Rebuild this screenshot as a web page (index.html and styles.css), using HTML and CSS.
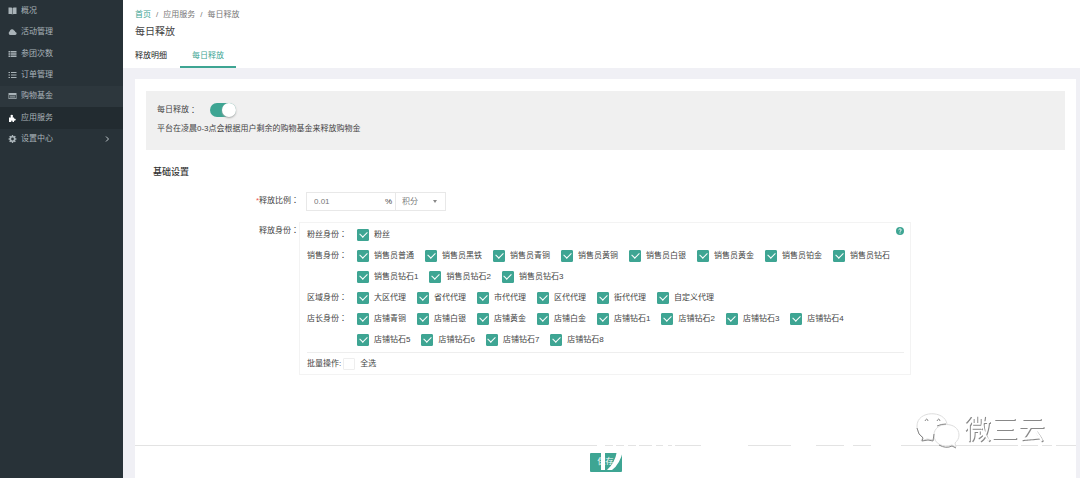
FILE: index.html
```html
<!DOCTYPE html>
<html lang="zh-CN">
<head>
<meta charset="utf-8">
<meta name="viewport" content="width=device-width, initial-scale=1">
<title>每日释放</title>
<link rel="stylesheet" href="styles.css">
</head>
<body>
<div class="layout">
  <aside class="sidebar">
    <nav class="menu">
      <a class="menu-item" href="#"><svg class="icon" viewBox="0 0 16 16"><path d="M0 1h5.500q1.500 0 2 1v13q-.6-1-2-1H0zM16 1h-5.500q-1.500 0-2 1v13q.6-1 2-1H16z"/></svg>概况</a>
      <a class="menu-item" href="#"><svg class="icon" viewBox="0 0 16 16"><path d="M4 14a4 4 0 0 1-1.500-7.500A4.500 4.500 0 0 1 11 5a3 3 0 0 1 2.500 3A3 3 0 0 1 13 14z"/></svg>活动管理</a>
      <a class="menu-item" href="#"><svg class="icon" viewBox="0 0 16 16"><path d="M0 2h4v3H0zM5 2h11v3H5zM0 6.500h4v3H0zM5 6.500h11v3H5zM0 11h4v3H0zM5 11h11v3H5z"/></svg>参团次数</a>
      <a class="menu-item" href="#"><svg class="icon" viewBox="0 0 16 16"><path d="M0 2h3v2H0zM5 2h11v2H5zM0 7h3v2H0zM5 7h11v2H5zM0 12h3v2H0zM5 12h11v2H5z"/></svg>订单管理</a>
      <a class="menu-item menu-item-hover" href="#"><svg class="icon" viewBox="0 0 16 16"><path fill-rule="evenodd" d="M0 2h16v12H0zM1.500 6v6.500h13V6z"/><path opacity=".6" d="M3 7h10v4.500H3z"/></svg>购物基金</a>
      <a class="menu-item menu-item-active" href="#"><svg class="icon" viewBox="0 0 16 16"><path d="M1 7h3.500V5.500a2.500 2.500 0 1 1 4 0V7H11v2.500a2.200 2.200 0 1 1 0 3.500v3H8v-2a1 1 0 0 0-2.500 0v2H1z"/></svg>应用服务</a>
      <a class="menu-item" href="#"><svg class="icon" viewBox="0 0 16 16"><path fill-rule="evenodd" d="M6.800 0h2.400l.4 2.200 1.300.5L12.800 1.500l1.700 1.700-1.200 1.900.5 1.300 2.200.4v2.400l-2.200.4-.5 1.300 1.200 1.900-1.700 1.700-1.900-1.200-1.300.5-.4 2.200H6.800l-.4-2.200-1.300-.5-1.900 1.200-1.700-1.700 1.200-1.900-.5-1.300L0 9.200V6.800l2.200-.4.5-1.300L1.500 3.200l1.700-1.700 1.900 1.200 1.300-.5zM8 5.200a2.800 2.800 0 1 0 0 5.600 2.800 2.800 0 0 0 0-5.600z"/></svg>设置中心<svg class="chevron" viewBox="0 0 8 8"><path d="M3 1.500l2.500 2.500L3 6.500"/></svg></a>
    </nav>
  </aside>

  <main class="main">
    <header class="page-head">
      <nav class="crumbs"><a class="crumb-home" href="#">首页</a><span>/</span><span>应用服务</span><span>/</span><span>每日释放</span></nav>
      <h1 class="page-title">每日释放</h1>
      <nav class="tabs">
        <a class="tab" href="#">释放明细</a>
        <a class="tab tab-active" href="#">每日释放</a>
      </nav>
    </header>

    <form class="card">
      <section class="notice">
        <label class="switch-row">每日释放<span class="colon">：</span><input class="switch" type="checkbox" checked></label>
        <p class="notice-text">平台在凌晨0-3点会根据用户剩余的购物基金来释放购物金</p>
      </section>

      <h2 class="section-title">基础设置</h2>

      <div class="field">
        <label class="field-label" for="ratio"><span class="required">*</span>释放比例<span class="colon">：</span></label>
        <div class="input-group">
          <input class="ratio" id="ratio" type="text" value="0.01">
          <span class="unit">%</span>
          <div class="kind-box">
            <select class="kind" aria-label="类型"><option>积分</option></select>
          </div>
        </div>
      </div>

      <div class="field field-roles">
        <span class="field-label">释放身份<span class="colon">：</span></span>
        <div class="roles">
          <div class="role-row">
            <span class="role-label">粉丝身份<span class="colon">：</span></span>
            <div class="checks">
              <label class="check"><input type="checkbox" checked>粉丝</label>
            </div>
            <svg class="help" viewBox="0 0 16 16"><circle cx="8" cy="8" r="8"/><path d="M5.500 6.300C5.500 3 10.500 3 10.500 6c0 1.700-2.500 1.700-2.500 3.600M8 11v2"/></svg>
          </div>
          <div class="role-row">
            <span class="role-label">销售身份<span class="colon">：</span></span>
            <div class="checks">
              <label class="check"><input type="checkbox" checked>销售员普通</label>
              <label class="check"><input type="checkbox" checked>销售员黑铁</label>
              <label class="check"><input type="checkbox" checked>销售员青铜</label>
              <label class="check"><input type="checkbox" checked>销售员黄铜</label>
              <label class="check"><input type="checkbox" checked>销售员白银</label>
              <label class="check"><input type="checkbox" checked>销售员黄金</label>
              <label class="check"><input type="checkbox" checked>销售员铂金</label>
              <label class="check"><input type="checkbox" checked>销售员钻石</label>
              <label class="check"><input type="checkbox" checked>销售员钻石1</label>
              <label class="check"><input type="checkbox" checked>销售员钻石2</label>
              <label class="check"><input type="checkbox" checked>销售员钻石3</label>
            </div>
          </div>
          <div class="role-row">
            <span class="role-label">区域身份<span class="colon">：</span></span>
            <div class="checks">
              <label class="check"><input type="checkbox" checked>大区代理</label>
              <label class="check"><input type="checkbox" checked>省代代理</label>
              <label class="check"><input type="checkbox" checked>市代代理</label>
              <label class="check"><input type="checkbox" checked>区代代理</label>
              <label class="check"><input type="checkbox" checked>街代代理</label>
              <label class="check"><input type="checkbox" checked>自定义代理</label>
            </div>
          </div>
          <div class="role-row">
            <span class="role-label">店长身份<span class="colon">：</span></span>
            <div class="checks">
              <label class="check"><input type="checkbox" checked>店铺青铜</label>
              <label class="check"><input type="checkbox" checked>店铺白银</label>
              <label class="check"><input type="checkbox" checked>店铺黄金</label>
              <label class="check"><input type="checkbox" checked>店铺白金</label>
              <label class="check"><input type="checkbox" checked>店铺钻石1</label>
              <label class="check"><input type="checkbox" checked>店铺钻石2</label>
              <label class="check"><input type="checkbox" checked>店铺钻石3</label>
              <label class="check"><input type="checkbox" checked>店铺钻石4</label>
              <span class="row-break"></span>
              <label class="check"><input type="checkbox" checked>店铺钻石5</label>
              <label class="check"><input type="checkbox" checked>店铺钻石6</label>
              <label class="check"><input type="checkbox" checked>店铺钻石7</label>
              <label class="check"><input type="checkbox" checked>店铺钻石8</label>
            </div>
          </div>
          <div class="batch">
            <span>批量操作:</span>
            <label class="check"><input type="checkbox">全选</label>
          </div>
        </div>
      </div>

      <footer class="actions">
        <button class="save" type="submit">保存</button>
        <svg class="marks" viewBox="0 0 490 36"><path d="M9 6h6v5H9zM25 6h3v5h-3zM36 6h4v5h-4zM48 6h3v5h-3zM64 6h4v5h-4zM75 6h5v5h-5zM84 6h3v5h-3zM113 6h47v5h-47zM203 6h25v5h-25zM256 6h9v5h-9zM283 6h30v5h-30zM430 6h3v5h-3zM450 6h4v5h-4zM464 6h4v5h-4zM13 8h4v25h-4zM29 14h6Q32 27 24 33h-5Q27 26 29 14z"/></svg>
      </footer>
    </form>
  </main>
</div>

<div class="watermark">
  <svg class="bubbles" viewBox="0 0 44 38"><path class="bubble" d="M31 13C29-1 1-1 1 15c0 5 2 8 6 11l-2 4 6-2 7 1"/><path class="bubble" d="M18 24c0-14 25-14 25 0 0 4-2 6-4 8l1 4-4-2c-9 3-18-1-18-10z"/><path class="stroke" d="M1 17q1 7 6 10l-1 3 6-1 5 1 1-7M21 15q4-2 9-2M23 34q7 4 13 1l4 2M9 10q2-4 3 0M21 10q2-4 3 0"/></svg>
  <span class="watermark-text">微三云</span>
</div>
</body>
</html>
```
FILE: styles.css
```css
* { box-sizing: border-box; }

body {
  margin: 0;
  background: #f0f0f5;
  color: #444;
  font: 8px/12px "Liberation Sans", "Noto Sans CJK SC", sans-serif;
}

a { color: inherit; text-decoration: none; }
h1, h2, p { margin: 0; font-weight: 400; }
.colon { font-family: "Noto Sans CJK TC", sans-serif; font-feature-settings: "locl" 0; line-height: 1; }

.layout { display: flex; min-height: 100vh; }

.sidebar { flex: 0 0 123px; background: #283238; }
.menu { display: grid; grid-auto-rows: 1fr; height: 150px; }
.menu-item {
  display: flex;
  align-items: center;
  gap: 4px;
  padding: 0 12px 0 8px;
  color: #a9b3b8;
}
.menu-item-hover { background: #2d373d; }
.menu-item-active { background: #222b30; }
.menu-item-active .icon { fill: #fff; }
.icon { width: 9px; height: 8px; fill: #a9b3b8; }
.chevron { width: 8px; height: 8px; margin-left: auto; fill: none; stroke: #c0c8cc; }

.main { flex: 1; min-width: 0; display: flex; flex-direction: column; }
.page-head { padding: 9px 12px 0; background: #fff; }
.crumbs { display: flex; gap: 5px; color: #777; }
.crumb-home { color: #3ea593; }
.page-title { margin-top: 3px; font-size: 10px; line-height: 16px; color: #444; }
.tabs { display: flex; margin-top: 4px; }
.tab { padding: 6px 12px 4px; border-bottom: 2px solid transparent; color: #222; }
.tab:first-child { padding-left: 0; padding-right: 13px; }
.tab-active { color: #3ea593; border-color: #3ea593; }

.card {
  flex: 1;
  display: flex;
  flex-direction: column;
  margin: 11px 4px 0 12px;
  padding-top: 12px;
  background: #fff;
}
.notice { margin: 0 11px; padding: 11px; min-height: 59px; background: #f0f0f0; }
.switch-row { display: flex; align-items: center; height: 16px; }
.switch {
  appearance: none;
  display: flex;
  width: 26px;
  height: 14px;
  margin: 0 0 0 13px;
  border-radius: 7px;
  background: #3ea593;
}
.switch::before {
  content: "";
  width: 14px;
  height: 14px;
  margin-left: auto;
  border-radius: 50%;
  background: #fff;
  box-shadow: 0 1px 2px #aaa;
}
.notice-text { margin-top: 5px; }
.section-title { margin: 15px 18px 0; font-size: 9px; line-height: 14px; font-weight: 500; color: #333; }

.field { display: flex; gap: 7px; margin-top: 13px; }
.field-label { flex: 0 0 164px; text-align: right; line-height: 18px; }
.required { color: #e55; }
.input-group { display: flex; align-items: center; height: 19px; border: 1px solid #e8e8e8; }
.ratio { width: 78px; padding: 0 7px; border: 0; font: inherit; color: #777; outline: 0; }
.unit { width: 10px; }
.kind-box {
  display: flex;
  align-items: center;
  align-self: stretch;
  padding-right: 8px;
  border-left: 1px solid #e8e8e8;
}
.kind-box::after {
  content: "";
  border: solid transparent;
  border-width: 3px 2px 0;
  border-top-color: #888;
}
.kind {
  appearance: none;
  width: 37px;
  padding: 0 6px;
  border: 0;
  background: none;
  color: #777;
  font: inherit;
}

.field-roles { gap: 0; margin-top: 11px; }
.roles { flex: 0 1 612px; padding: 1px 6px 0 7px; border: 1px solid #f3f3f3; }
.role-row { display: flex; align-items: flex-start; line-height: 21px; }
.role-label { flex: 0 0 50px; }
.checks { flex: 1; display: flex; flex-wrap: wrap; column-gap: 11px; }
.check { display: flex; align-items: center; gap: 5px; height: 21px; }
.check input {
  appearance: none;
  width: 12px;
  height: 12px;
  margin: 0;
  border: 1px solid #eee;
  border-radius: 1px;
  display: grid;
  place-items: center;
}
.check input:checked { background: #3ea593; border-color: #3ea593; }
.check input:checked::before {
  content: "";
  width: 6px;
  height: 4px;
  margin-bottom: 2px;
  border: solid #fff;
  border-width: 0 0 1px 1px;
  rotate: -45deg;
}
.row-break { flex-basis: 100%; }
.help { width: 8px; height: 8px; margin-top: 3px; fill: #3ea593; }
.help path { fill: none; stroke: #fff; stroke-width: 2; }
.batch { display: flex; align-items: center; gap: 2px; margin-top: 2px; border-top: 1px solid #eee; }

.actions {
  position: relative;
  display: flex;
  justify-content: center;
  align-items: center;
  height: 33px;
  margin-top: auto;
  border-top: 1px solid #e3e3e3;
}
.save {
  width: 32px;
  height: 19px;
  padding: 0;
  border: 0;
  border-radius: 1px;
  background: #3ea593;
  color: #fff;
  font: inherit;
}
.marks { position: absolute; left: calc(50% - 18px); top: -9px; width: 490px; height: 36px; fill: #fff; }

.watermark {
  position: fixed;
  right: 35px;
  bottom: 29px;
  display: flex;
  align-items: center;
  gap: 4px;
}
.bubbles { width: 44px; height: 38px; fill: #fff; }
.bubble { stroke: #ddd; stroke-width: 1; }
.stroke { fill: none; stroke: #888; stroke-width: 1; }
.watermark-text { font-size: 27px; line-height: 38px; color: #fff; text-shadow: 1px 1px 0 #888; }
```
